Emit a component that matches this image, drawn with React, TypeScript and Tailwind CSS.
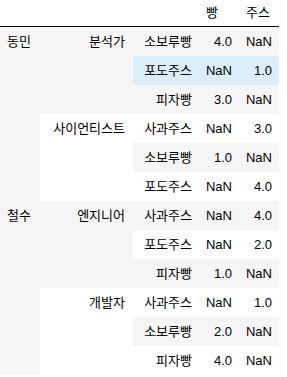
import React from "react";

const GRAY = "bg-[#f5f5f5]";
const WHITE = "bg-white";
const BLUE = "bg-[#dbeefc]";

type Row = {
  l0?: { text: string; span: number; bg: string };
  l1?: { text: string; span: number; bg: string };
  item: string;
  a: string;
  b: string;
  bg: string;
};

const rows: Row[] = [
  { l0: { text: "동민", span: 6, bg: GRAY }, l1: { text: "분석가", span: 3, bg: GRAY }, item: "소보루빵", a: "4.0", b: "NaN", bg: GRAY },
  { item: "포도주스", a: "NaN", b: "1.0", bg: BLUE },
  { item: "피자빵", a: "3.0", b: "NaN", bg: GRAY },
  { l1: { text: "사이언티스트", span: 3, bg: WHITE }, item: "사과주스", a: "NaN", b: "3.0", bg: WHITE },
  { item: "소보루빵", a: "1.0", b: "NaN", bg: GRAY },
  { item: "포도주스", a: "NaN", b: "4.0", bg: WHITE },
  { l0: { text: "철수", span: 6, bg: GRAY }, l1: { text: "엔지니어", span: 3, bg: GRAY }, item: "사과주스", a: "NaN", b: "4.0", bg: GRAY },
  { item: "포도주스", a: "NaN", b: "2.0", bg: WHITE },
  { item: "피자빵", a: "1.0", b: "NaN", bg: GRAY },
  { l1: { text: "개발자", span: 3, bg: WHITE }, item: "사과주스", a: "NaN", b: "1.0", bg: WHITE },
  { item: "소보루빵", a: "2.0", b: "NaN", bg: GRAY },
  { item: "피자빵", a: "4.0", b: "NaN", bg: WHITE },
];

export default function App() {
  return (
    <div
      className="bg-white text-black min-h-[377px]"
      style={{ fontFamily: '"Liberation Sans", "Noto Sans CJK KR", sans-serif' }}
    >
      <table className="border-collapse border-spacing-0 text-[13px] table-fixed w-[279px]">
        <colgroup>
          <col className="w-[40px]" />
          <col className="w-[93px]" />
          <col className="w-[67px]" />
          <col className="w-[39px]" />
          <col className="w-[40px]" />
        </colgroup>
        <thead>
          <tr className="h-[26px]">
            <th className="p-0 border-b border-black"></th>
            <th className="p-0 border-b border-black"></th>
            <th className="p-0 border-b border-black"></th>
            <th className="p-0 pl-[6px] text-left font-normal leading-[26px] border-b border-black">빵</th>
            <th className="p-0 pl-[7px] text-left font-normal leading-[26px] border-b border-black">주스</th>
          </tr>
        </thead>
        <tbody>
          {rows.map((r, i) => (
            <tr key={i} className="h-[29px]">
              {r.l0 && (
                <th
                  rowSpan={r.l0.span}
                  className={`${r.l0.bg} p-0 pl-[7px] text-left align-top font-normal leading-[29px] whitespace-nowrap`}
                >
                  {r.l0.text}
                </th>
              )}
              {r.l1 && (
                <th
                  rowSpan={r.l1.span}
                  className={`${r.l1.bg} p-0 pr-[8px] text-right align-top font-normal leading-[29px] whitespace-nowrap`}
                >
                  {r.l1.text}
                </th>
              )}
              <th className={`${r.bg} p-0 pr-[8px] text-right font-normal leading-[29px] whitespace-nowrap`}>
                {r.item}
              </th>
              <td className={`${r.bg} p-0 pr-[7px] text-right leading-[29px]`}>{r.a}</td>
              <td className={`${r.bg} p-0 pr-[7px] text-right leading-[29px]`}>{r.b}</td>
            </tr>
          ))}
        </tbody>
      </table>
    </div>
  );
}
